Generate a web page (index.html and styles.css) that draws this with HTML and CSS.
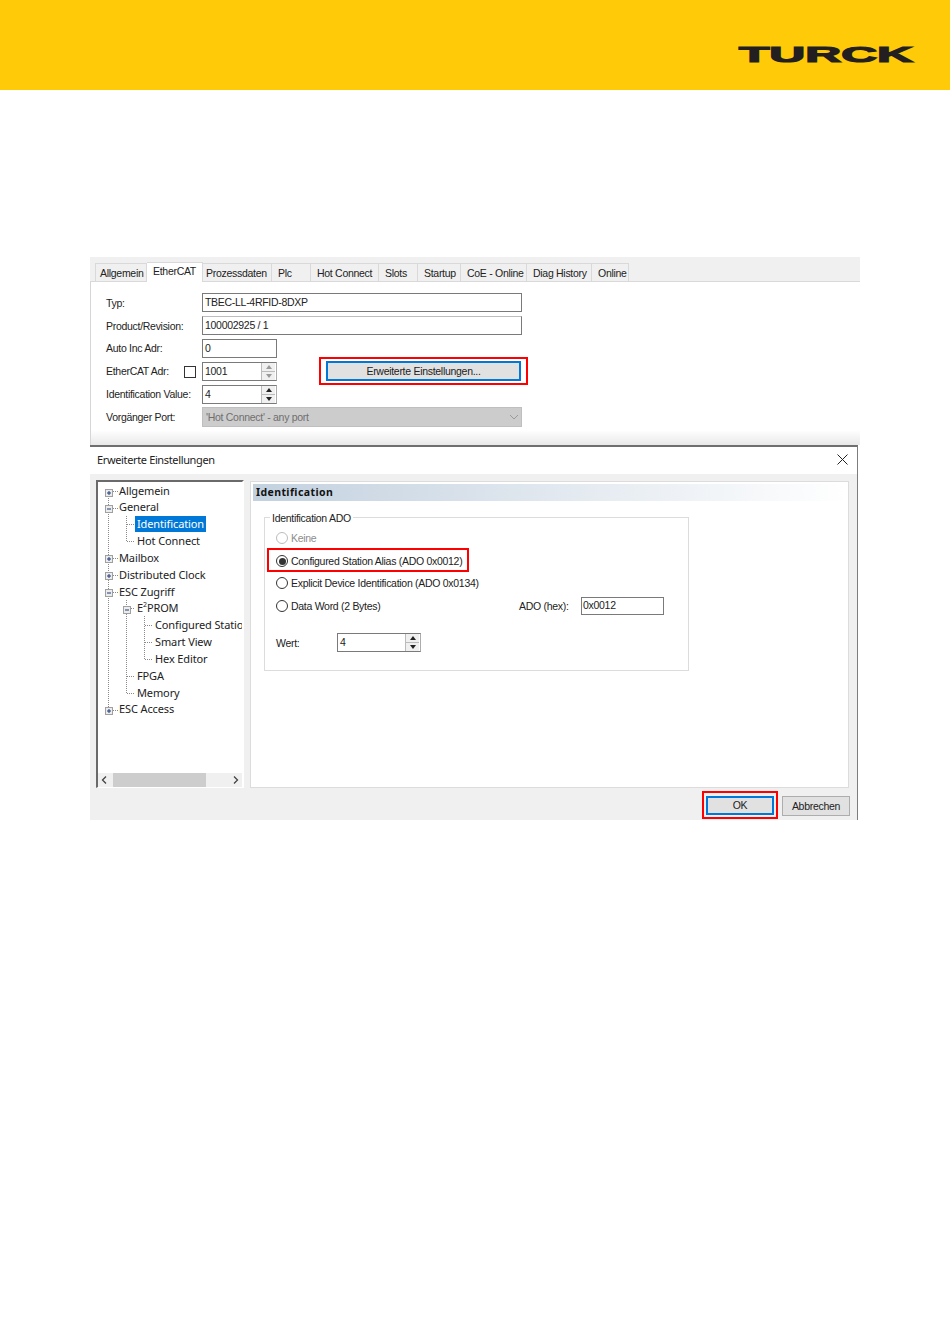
FILE: index.html
```html
<!DOCTYPE html>
<html lang="de">
<head>
<meta charset="utf-8">
<title>Erweiterte Einstellungen</title>
<link rel="stylesheet" href="styles.css">
</head>
<body>
<header class="brand">
  <svg class="logo" viewBox="0 0 176 18" width="176" height="18" role="img" aria-label="TURCK">
    <text x="1" y="17.400" textLength="174" lengthAdjust="spacingAndGlyphs" class="logo-text">TURCK</text>
  </svg>
</header>
<main class="shot">
  <section class="panel">
    <nav class="tabs">
      <span class="tab w-allg">Allgemein</span>
      <span class="tab tab-active">EtherCAT</span>
      <span class="tab w-proz">Prozessdaten</span>
      <span class="tab w-plc">Plc</span>
      <span class="tab w-hot">Hot Connect</span>
      <span class="tab w-slots">Slots</span>
      <span class="tab w-start">Startup</span>
      <span class="tab w-coe">CoE - Online</span>
      <span class="tab w-diag">Diag History</span>
      <span class="tab w-onl">Online</span>
    </nav>
    <div class="form">
      <div class="row row-top"><label class="lbl">Typ:</label><div class="field wide">TBEC-LL-4RFID-8DXP</div></div>
      <div class="row row-top"><label class="lbl">Product/Revision:</label><div class="field wide light-top">100002925 / 1</div></div>
      <div class="row"><label class="lbl">Auto Inc Adr:</label><div class="field short">0</div></div>
      <div class="row">
        <label class="lbl lbl-check">EtherCAT Adr:<span class="check"></span></label>
        <div class="spin s-short">
          <span class="spin-val">1001</span>
          <span class="spin-btns off"><i class="up"></i><i class="down"></i></span>
        </div>
        <button class="btn btn-focus btn-adv callout">Erweiterte Einstellungen...</button>
      </div>
      <div class="row">
        <label class="lbl">Identification Value:</label>
        <div class="spin s-short">
          <span class="spin-val">4</span>
          <span class="spin-btns"><i class="up"></i><i class="down"></i></span>
        </div>
      </div>
      <div class="row row-select">
        <label class="lbl">Vorgänger Port:</label>
        <div class="select">'Hot Connect' - any port
          <svg class="chev" viewBox="0 0 10 6" width="10" height="6"><path d="M1 1l4 4 4-4" fill="none" stroke="#9a9a9a" stroke-width="1"/></svg>
        </div>
      </div>
    </div>
  </section>

  <section class="dialog">
    <div class="titlebar">
      <span>Erweiterte Einstellungen</span>
      <svg class="close" viewBox="0 0 11 11" width="11" height="11"><path d="M.5.5l10 10M10.500.5l-10 10" stroke="#222" stroke-width="1" fill="none"/></svg>
    </div>
    <div class="dlg-body">
      <div class="dlg-main">
        <aside class="tree">
          <svg class="tree-lines" viewBox="96 480 146 293" width="146" height="293" aria-hidden="true">
            <g class="dots">
              <path d="M108.5 492V711M126.5 516V541M126.5 600V693M144.5 616V659"/>
              <path d="M113 491.5h5M113 508.5h5M113 558.5h5M113 575.5h5M113 592.5h5M113 710.5h5M127 524.5h7M127 541.5h7M131 608.5h4M127 676.5h7M127 693.5h7M145 625.5h7M145 642.5h7M145 659.5h7"/>
            </g>
            <g class="boxes">
              <rect x="105.5" y="489.5" width="7" height="7"/><rect x="105.5" y="505.5" width="7" height="7"/>
              <rect x="105.5" y="555.5" width="7" height="7"/><rect x="105.5" y="572.5" width="7" height="7"/>
              <rect x="105.5" y="589.5" width="7" height="7"/><rect x="123.5" y="606.5" width="7" height="7"/>
              <rect x="105.5" y="707.5" width="7" height="7"/>
            </g>
            <path class="marks" d="M107 493h4M109 491v4M107 509h4M107 559h4M109 557v4M107 576h4M109 574v4M107 593h4M125 610h4M107 711h4M109 709v4"/>
          </svg>
          <ul class="tree-list">
            <li class="node l0">Allgemein</li>
            <li class="node l0">General</li>
            <li class="node l1"><span class="sel">Identification</span></li>
            <li class="node l1">Hot Connect</li>
            <li class="node l0">Mailbox</li>
            <li class="node l0">Distributed Clock</li>
            <li class="node l0">ESC Zugriff</li>
            <li class="node l1">E<sup>2</sup>PROM</li>
            <li class="node l2">Configured Station Alias</li>
            <li class="node l2">Smart View</li>
            <li class="node l2">Hex Editor</li>
            <li class="node l1">FPGA</li>
            <li class="node l1">Memory</li>
            <li class="node l0">ESC Access</li>
          </ul>
          <div class="hscroll">
            <svg viewBox="0 0 6 8" width="6" height="8"><path d="M5 .5L1.5 4 5 7.500" fill="none" stroke="#444" stroke-width="1.300"/></svg>
            <span class="thumb"></span>
            <svg viewBox="0 0 6 8" width="6" height="8"><path d="M1 .5L4.500 4 1 7.500" fill="none" stroke="#444" stroke-width="1.300"/></svg>
          </div>
        </aside>
        <div class="content">
          <h2 class="bar">Identification</h2>
          <div class="group">
            <span class="legend">Identification ADO</span>
            <div class="opt opt-keine"><span class="radio dim"></span><span class="dim-text">Keine</span></div>
            <div class="opt opt-conf"><span class="radio on"></span><span>Configured Station Alias (ADO 0x0012)</span></div>
            <div class="opt opt-expl"><span class="radio"></span><span>Explicit Device Identification (ADO 0x0134)</span></div>
            <div class="opt opt-data">
              <span class="radio"></span><span class="data-lbl">Data Word (2 Bytes)</span>
              <span class="hex-lbl">ADO (hex):</span>
              <div class="field hex">0x0012</div>
            </div>
            <div class="opt opt-wert">
              <span class="wert-lbl">Wert:</span>
              <div class="spin s-wert">
                <span class="spin-val">4</span>
                <span class="spin-btns"><i class="up"></i><i class="down"></i></span>
              </div>
            </div>
          </div>
        </div>
      </div>
      <footer class="actions">
        <button class="btn btn-focus btn-ok callout-ok">OK</button>
        <button class="btn btn-cancel">Abbrechen</button>
      </footer>
    </div>
  </section>
</main>
</body>
</html>
```
FILE: styles.css
```css
* { box-sizing: border-box; }
html, body { margin: 0; padding: 0; background: #fff; }
body { font-family: "Liberation Sans", "Noto Sans", sans-serif; font-size: 10.5px; letter-spacing: -0.29px; color: #222; min-height: 1344px; overflow: hidden; }

.brand { height: 90px; background: #ffcb08; display: flex; justify-content: flex-end; align-items: flex-start; padding: 45px 36px 0 0; }
.logo { display: block; overflow: visible; }
.logo-text { font-family: "Liberation Sans", sans-serif; font-weight: 700; font-size: 22.500px; letter-spacing: 0; fill: #231f20; stroke: #231f20; stroke-width: 1.200px; }

.shot { position: relative; width: 770px; height: 563px; margin: 167px 0 0 90px; background: #fff; }

.panel { height: 188px; border-left: 1px solid #d6d6d6; background: linear-gradient(#fff 0, #fff 173px, #e9e9e9 188px); }
.tabs { height: 25px; margin-left: -1px; background: #f0f0f0; border-bottom: 1px solid #d9d9d9; display: flex; align-items: flex-end; padding-left: 5px; }
.tab { height: 18px; border: 1px solid #d9d9d9; border-bottom: 0; border-left: 0; display: flex; align-items: center; padding-left: 6px; white-space: nowrap; background: #f0f0f0; }
.tab:first-child { border-left: 1px solid #d9d9d9; }
.tab-active { width: 56px; height: 20px; margin-bottom: -1px; background: #fff; padding-bottom: 3px; border-top: 1px solid #d9d9d9; }
.w-allg { width: 52px; padding-left: 4px; } .w-proz { width: 69px; padding-left: 3px; } .w-plc { width: 39px; } .w-hot { width: 68px; } .w-slots { width: 39px; }
.w-start { width: 43px; } .w-coe { width: 66px; } .w-diag { width: 65px; } .w-onl { width: 37px; }

.form { padding: 11px 0 0 15px; display: flex; flex-direction: column; gap: 4px; }
.row { height: 19px; display: flex; align-items: center; }
.row-top .lbl { padding-bottom: 0; padding-top: 1px; }
.row-select { height: 20px; margin-top: -1px; }
.lbl { width: 96px; flex: none; display: flex; align-items: center; white-space: nowrap; padding-bottom: 1px; }
.lbl-check { position: relative; }
.check { position: absolute; left: 78px; top: 50%; margin-top: -6px; width: 12px; height: 12px; border: 1px solid #333; background: #fff; }
.field { height: 19px; border: 1px solid #7a7a7a; background: #fff; padding-left: 2px; line-height: 16px; white-space: nowrap; }
.light-top { border-top-color: #bdbdbd; }
.wide { width: 320px; }
.short { width: 75px; }

.spin { height: 19px; display: flex; border: 1px solid #7a7a7a; border-right-color: #acacac; background: #fff; }
.s-short { width: 75px; }
.s-wert { width: 84px; height: 19px; }
.spin-val { flex: 1; padding-left: 2px; line-height: 16px; }
.spin-btns { width: 14px; margin-right: 1px; display: flex; flex-direction: column; background: #f0f0f0; border-left: 1px solid #bbb; }
.spin-btns i { flex: 1; display: flex; align-items: center; justify-content: center; border-bottom: 1px solid #bbb; }
.spin-btns i:last-child { border-bottom: 0; }
.spin-btns i::before { content: ""; border-left: 3.5px solid transparent; border-right: 3.5px solid transparent; }
.up::before { border-bottom: 4px solid #222; }
.down::before { border-top: 4px solid #222; }
.off .up::before { border-bottom-color: #9a9a9a; }
.off .down::before { border-top-color: #9a9a9a; }

.select { position: relative; width: 320px; height: 20px; background: #cccccc; border: 1px solid #bfbfbf; color: #6f6f6f; padding-left: 3px; line-height: 18px; }
.chev { position: absolute; right: 2px; top: 6px; }

.btn { font: inherit; letter-spacing: inherit; color: #222; background: #e1e1e1; padding: 0; display: block; }
.btn-focus { border: 2px solid #0078d7; }
.btn-adv { position: relative; width: 195px; height: 20px; margin-left: 49px; align-self: flex-start; margin-top: -1px; }
.callout::after { content: ""; position: absolute; inset: -6px -9px; border: 2px solid #f00; }

.dialog { position: absolute; left: 0; top: 188px; width: 768px; height: 375px; background: #f0f0f0; border-top: 2px solid #6f6f6f; border-right: 1px solid #7d7d7d; display: flex; flex-direction: column; }
.titlebar { height: 27px; background: #fff; display: flex; align-items: center; justify-content: space-between; padding: 0 9px 2px 7px; font-family: "Noto Sans", sans-serif; font-size: 11px; letter-spacing: -0.36px; flex: none; }
.close { display: block; }
.dlg-body { flex: 1; display: flex; flex-direction: column; padding: 6px 7px 0 6px; }
.dlg-main { display: flex; gap: 6px; height: 308px; }

.tree { position: relative; width: 148px; background: #fff; border-top: 2px solid #6a6a6a; border-left: 2px solid #6a6a6a; border-right: 2px solid #fff; border-bottom: 1px solid #fff; display: flex; flex-direction: column; overflow: hidden; }
.tree-lines { position: absolute; left: -2px; top: -2px; }
.dots path { fill: none; stroke: #8a8a8a; stroke-width: 1; stroke-dasharray: 1 1; }
.boxes rect { fill: #ececec; stroke: #a0a0a0; stroke-width: 1; }
.marks { fill: none; stroke: #1e3a7a; stroke-width: 1; }
.tree-list { list-style: none; margin: 0; padding: 0.500px 0 0; flex: 1; font-family: "Noto Sans", sans-serif; font-size: 11px; letter-spacing: -0.12px; position: relative; }
.node { height: 16.850px; line-height: 16px; white-space: nowrap; }
.l0 { padding-left: 21px; }
.l1 { padding-left: 39px; }
.l2 { padding-left: 57px; }
.sel { display: inline-block; height: 16px; margin-left: -2px; padding: 0 2px; background: #0078d7; color: #fff; }
.node sup { font-size: 7px; line-height: 0; }
.hscroll { height: 14px; background: #f0f0f0; display: flex; align-items: center; padding: 0 3px; position: relative; flex: none; }
.thumb { width: 93px; height: 14px; background: #cdcdcd; margin: 0 auto 0 6px; }

.content { width: 599px; height: 307px; margin-top: 1px; background: #fff; border: 1px solid #dcdcdc; padding: 2px 0 0 2px; }
.bar { margin: 0; height: 17px; background: linear-gradient(90deg, #c3d1df, #ffffff 100%); font-family: "Noto Sans", sans-serif; font-size: 10.5px; font-weight: 700; letter-spacing: 0.4px; padding-left: 3px; line-height: 16px; color: #111; }

.group { position: relative; width: 425px; height: 154px; margin: 16px 0 0 11px; border: 1px solid #dcdcdc; }
.legend { position: absolute; left: 5px; top: -7px; background: #fff; padding: 0 2px; line-height: 14px; white-space: nowrap; }
.opt { display: flex; align-items: center; gap: 3px; white-space: nowrap; height: 16px; margin-left: 11px; }
.opt-keine { margin-top: 12px; }
.opt-conf { margin-top: 7px; width: max-content; position: relative; }
.opt-expl { margin-top: 6px; }
.opt-data { margin-top: 7px; }
.opt-wert { margin-top: 19px; height: 19px; }
.radio { position: relative; width: 12px; height: 12px; border: 1px solid #333; border-radius: 50%; background: #fff; flex: none; }
.radio.dim { border-color: #bcbcbc; }
.radio.on::after { content: ""; position: absolute; inset: 1.500px; background: #333; border-radius: 50%; }
.dim-text { color: #8d8d8d; }
.opt-conf::after { content: ""; position: absolute; left: -9px; right: -7px; top: -5px; bottom: -3px; border: 2px solid #f00; }
.data-lbl { width: 225px; }
.hex-lbl { width: 59px; }
.hex { width: 83px; height: 18px; line-height: 15px; padding-left: 1px; }
.wert-lbl { width: 58px; }

.actions { display: flex; justify-content: flex-end; gap: 8px; margin-top: 8px; }
.btn-ok { position: relative; width: 68px; height: 19px; line-height: 15px; }
.callout-ok::after { content: ""; position: absolute; inset: -7px -6px -6px -6px; border: 2px solid #f00; }
.btn-cancel { width: 68px; height: 20px; border: 1px solid #adadad; }
```
